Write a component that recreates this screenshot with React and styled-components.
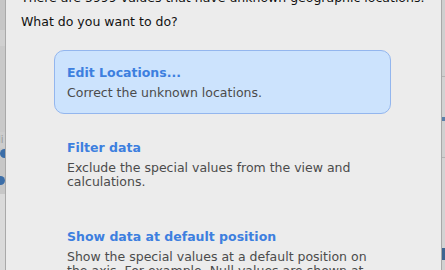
import styled, { createGlobalStyle } from "styled-components";

const GlobalStyle = createGlobalStyle`
    html, body {
        margin: 0;
        padding: 0;
        width: 445px;
        height: 270px;
        overflow: hidden;
        background: #d4d4d4;
    }
    body {
        font-family: "DejaVu Sans", "Liberation Sans", sans-serif;
    }
`;

const options = [
    {
        title: "Edit Locations...",
        text: "Correct the unknown locations.",
        selected: true,
    },
    {
        title: "Filter data",
        text: "Exclude the special values from the view and calculations.",
    },
    {
        title: "Show data at default position",
        text: "Show the special values at a default position on the axis. For example, Null values are shown at 0.",
    },
];

export default function App() {
    return (
        <>
            <GlobalStyle />
            <Screen>
                <LeftStrip>
                    <Segment $h={30} $bg="#c6c6c6" />
                    <Segment $h={16} $bg="#d0d0d0" />
                    <Segment $h={86} $bg="#c9c9c9" />
                    <Segment $h={16} $bg="#cdcdcd">
                        <Faint>li</Faint>
                    </Segment>
                    <Segment $h={46} $bg="#c7c7c7">
                        <Dot $x={0} $top={1} />
                        <Dot $x={-4} $top={28} />
                    </Segment>
                    <Segment $h={76} $bg="#dadada" />
                </LeftStrip>
                <Dialog>
                    <Body>
                        <Intro>There are 5999 values that have unknown geographic locations.</Intro>
                        <Question>What do you want to do?</Question>
                        <OptionList>
                            {options.map((o) => (
                                <Option key={o.title} $selected={o.selected}>
                                    <OptionTitle>{o.title}</OptionTitle>
                                    <OptionText>{o.text}</OptionText>
                                </Option>
                            ))}
                        </OptionList>
                    </Body>
                </Dialog>
                <RightStrip>
                    <Segment $h={76} $bg="#cfcfcf" $line />
                    <Segment $h={40} $bg="#d2d2d2" />
                    <Segment $h={4} $bg="#5b7fa8" />
                    <Segment $h={36} $bg="#d0d0d0" $line />
                    <Segment $h={90} $bg="#d3d3d3" />
                    <Segment $h={12} $bg="#3f6591" />
                    <Segment $h={12} $bg="#d0d0d0" />
                </RightStrip>
            </Screen>
        </>
    );
}

const Screen = styled.div`
    display: flex;
    width: 445px;
    height: 270px;
    overflow: hidden;
`;

const LeftStrip = styled.div`
    width: 5px;
    flex-shrink: 0;
    display: flex;
    flex-direction: column;
    border-right: 1px solid #a9a9a9;
`;

const RightStrip = styled.div`
    width: 3px;
    flex-shrink: 0;
    display: flex;
    flex-direction: column;
    border-left: 1px solid #a8a8a8;
`;

const Segment = styled.div`
    height: ${(p) => p.$h}px;
    flex-shrink: 0;
    background: ${(p) => p.$bg};
    border-bottom: ${(p) => (p.$line ? "1px solid #b3b3b3" : "none")};
    position: relative;
    overflow: hidden;
`;

const Faint = styled.span`
    display: block;
    font-size: 10px;
    line-height: 16px;
    color: #9a9a9a;
    margin-left: -2px;
`;

const Dot = styled.div`
    position: absolute;
    top: ${(p) => p.$top}px;
    left: ${(p) => p.$x}px;
    width: 9px;
    height: 9px;
    border-radius: 50%;
    background: #3c6ea8;
`;

const Dialog = styled.div`
    flex: 1;
    background: #ececec;
    overflow: hidden;
`;

const Body = styled.div`
    margin-top: -10px;
    padding: 0 14px 0 15px;
`;

const Intro = styled.p`
    margin: 0;
    font-size: 12.5px;
    line-height: 16px;
    color: #111;
`;

const Question = styled.p`
    margin: 8px 0 0;
    font-size: 12.5px;
    line-height: 16px;
    color: #111;
`;

const OptionList = styled.div`
    display: flex;
    flex-direction: column;
    gap: 11px;
    margin: 20px 36px 0 33px;
`;

const Option = styled.div`
    padding: 14px 12px 13px;
    border-radius: 10px;
    border: 1px solid ${(p) => (p.$selected ? "#93b6ee" : "transparent")};
    background: ${(p) => (p.$selected ? "#cce3fd" : "transparent")};
`;

const OptionTitle = styled.div`
    font-size: 12.5px;
    font-weight: bold;
    line-height: 16px;
    color: #3d7fdf;
`;

const OptionText = styled.div`
    margin-top: 5px;
    font-size: 12.5px;
    line-height: 14px;
    color: #4b4b4b;
`;
